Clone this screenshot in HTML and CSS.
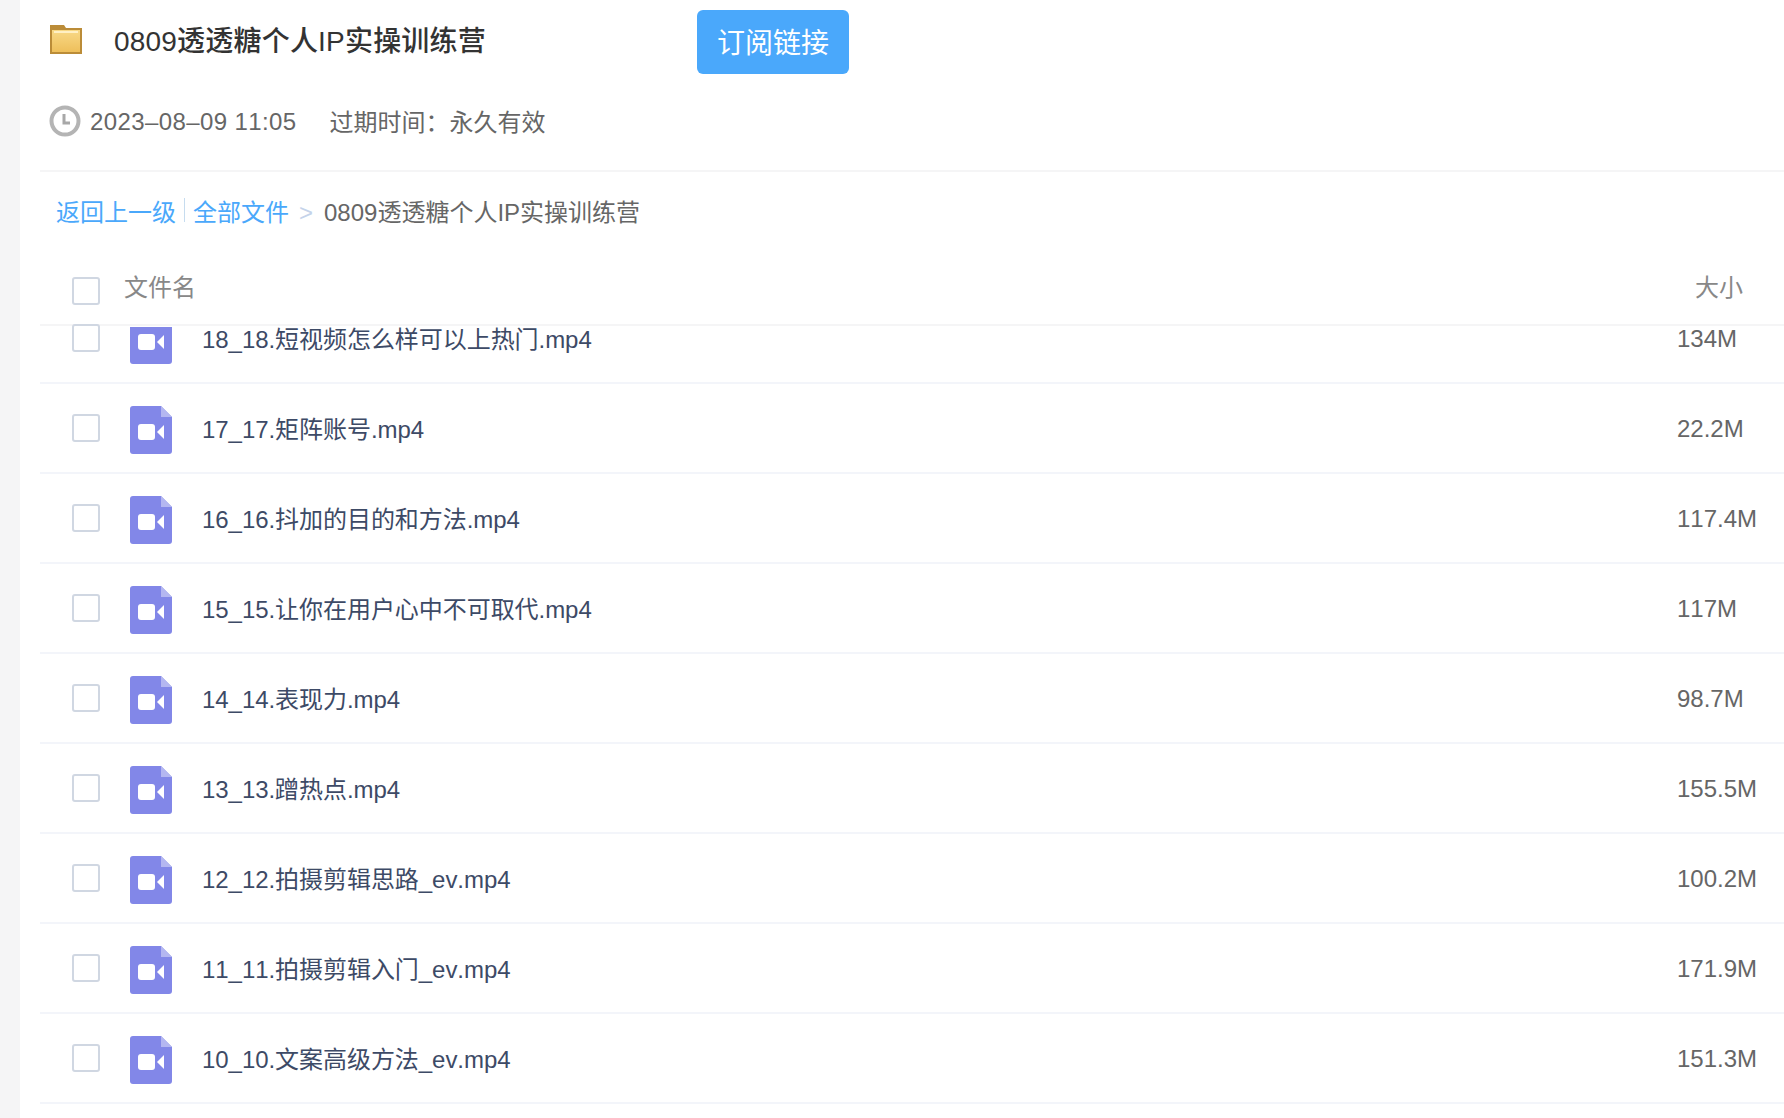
FILE: index.html
```html
<!DOCTYPE html>
<html lang="zh-CN">
<head>
    <meta charset="UTF-8">
    <title>0809透透糖个人IP实操训练营</title>
    <link rel="stylesheet" href="styles.css">
</head>
<body>
    <!-- Shared video file icon -->
    <svg class="icon-defs" width="0" height="0">
        <symbol id="video-file" viewBox="0 0 42 48">
            <path d="M3 0h28l11 11v34a3 3 0 0 1-3 3H3a3 3 0 0 1-3-3V3a3 3 0 0 1 3-3z" fill="#8287e8"/>
            <path d="M31 0l11 11H31z" fill="#b4b7f1"/>
            <rect x="8" y="18" width="17" height="16" rx="3" fill="#fff"/>
            <path d="M34 19v14l-7-7z" fill="#fff"/>
        </symbol>
    </svg>

    <div class="side-strip"></div>
    <main class="share">
        <!-- Share title -->
        <div class="share-head">
            <svg class="folder-icon" viewBox="0 0 32 30" width="32" height="30">
                <defs>
                    <linearGradient id="folder-fill" x1="0" y1="0" x2="0" y2="1">
                        <stop offset="0" stop-color="#f8d987"/>
                        <stop offset="1" stop-color="#eebf5b"/>
                    </linearGradient>
                </defs>
                <path d="M0 1h14l2 3h16v26H0z" fill="#bb8c38"/>
                <path d="M2 6h28v22H2z" fill="url(#folder-fill)"/>
                <path d="M4 7h24v2H4z" fill="#fff0c4"/>
            </svg>
            <h1>0809透透糖个人IP实操训练营</h1>
            <a class="btn-subscribe" href="#">订阅链接</a>
        </div>
        <div class="share-meta">
            <svg class="clock-icon" viewBox="0 0 32 32" width="32" height="32">
                <circle cx="16" cy="16" r="13.5" fill="none" stroke="#b4b4b4" stroke-width="4"/>
                <path d="M15 9v9h6" fill="none" stroke="#a8a8a8" stroke-width="3"/>
            </svg>
            <span class="share-date">2023–08–09 11:05</span>
            <span class="share-expire">过期时间&#xFF1A;永久有效</span>
        </div>

        <!-- Breadcrumb -->
        <div class="crumbs">
            <a href="#">返回上一级</a>
            <i class="crumb-bar"></i>
            <a href="#">全部文件</a>
            <span class="crumb-sep">&gt;</span>
            <span>0809透透糖个人IP实操训练营</span>
        </div>

        <!-- File table -->
        <div class="file-header">
            <span class="check"></span>
            <span class="file-header-name">文件名</span>
            <span class="file-header-size">大小</span>
        </div>
        <div class="file-scroll">
            <ul class="file-list">
                <li class="file-row">
                    <span class="check"></span>
                    <svg class="video-icon" width="42" height="48"><use href="#video-file"/></svg>
                    <span class="file-name">18_18.短视频怎么样可以上热门.mp4</span>
                    <span class="file-size">134M</span>
                </li>
                <li class="file-row">
                    <span class="check"></span>
                    <svg class="video-icon" width="42" height="48"><use href="#video-file"/></svg>
                    <span class="file-name">17_17.矩阵账号.mp4</span>
                    <span class="file-size">22.2M</span>
                </li>
                <li class="file-row">
                    <span class="check"></span>
                    <svg class="video-icon" width="42" height="48"><use href="#video-file"/></svg>
                    <span class="file-name">16_16.抖加的目的和方法.mp4</span>
                    <span class="file-size">117.4M</span>
                </li>
                <li class="file-row">
                    <span class="check"></span>
                    <svg class="video-icon" width="42" height="48"><use href="#video-file"/></svg>
                    <span class="file-name">15_15.让你在用户心中不可取代.mp4</span>
                    <span class="file-size">117M</span>
                </li>
                <li class="file-row">
                    <span class="check"></span>
                    <svg class="video-icon" width="42" height="48"><use href="#video-file"/></svg>
                    <span class="file-name">14_14.表现力.mp4</span>
                    <span class="file-size">98.7M</span>
                </li>
                <li class="file-row">
                    <span class="check"></span>
                    <svg class="video-icon" width="42" height="48"><use href="#video-file"/></svg>
                    <span class="file-name">13_13.蹭热点.mp4</span>
                    <span class="file-size">155.5M</span>
                </li>
                <li class="file-row">
                    <span class="check"></span>
                    <svg class="video-icon" width="42" height="48"><use href="#video-file"/></svg>
                    <span class="file-name">12_12.拍摄剪辑思路_ev.mp4</span>
                    <span class="file-size">100.2M</span>
                </li>
                <li class="file-row">
                    <span class="check"></span>
                    <svg class="video-icon" width="42" height="48"><use href="#video-file"/></svg>
                    <span class="file-name">11_11.拍摄剪辑入门_ev.mp4</span>
                    <span class="file-size">171.9M</span>
                </li>
                <li class="file-row">
                    <span class="check"></span>
                    <svg class="video-icon" width="42" height="48"><use href="#video-file"/></svg>
                    <span class="file-name">10_10.文案高级方法_ev.mp4</span>
                    <span class="file-size">151.3M</span>
                </li>
            </ul>
        </div>
    </main>
</body>
</html>
```

FILE: styles.css
```css
* {
    margin: 0;
    padding: 0;
    box-sizing: border-box;
}

html, body {
    height: 100%;
    overflow: hidden;
}

body {
    display: flex;
    background-color: #fff;
    color: #666;
    font-family: "Liberation Sans", "Noto Sans CJK SC", sans-serif;
    font-size: 24px;
    font-kerning: none;
}

.icon-defs {
    position: absolute;
}

.side-strip {
    width: 20px;
    background-color: #f5f5f6;
}

.share {
    flex: 1;
    min-width: 0;
    padding-left: 20px;
}

/* Title block */
.share-head {
    display: flex;
    align-items: center;
    height: 74px;
    padding: 10px 0 0 10px;
}

.folder-icon {
    margin-top: -6px;
}

.share-head h1 {
    width: 583px;
    margin: 0 0 6px 32px;
    color: #333;
    font-size: 28px;
    font-weight: 500;
    letter-spacing: 0.2px;
}

.btn-subscribe {
    display: block;
    width: 152px;
    height: 64px;
    line-height: 68px;
    background-color: #4aa8fb;
    color: #fff;
    font-size: 28px;
    text-align: center;
    text-decoration: none;
    border-radius: 6px;
}

.share-meta {
    display: flex;
    align-items: center;
    height: 98px;
    padding: 0 0 2px 9px;
    border-bottom: 2px solid #f5f5f6;
    color: #666;
}

.clock-icon {
    margin-right: 9px;
}

.share-date {
    margin: 2px 33px 0 0;
    letter-spacing: 0.4px;
}

.share-expire {
    padding-bottom: 2px;
}

/* Breadcrumb */
.crumbs {
    display: flex;
    align-items: center;
    height: 85px;
    padding: 0 0 9px 16px;
}

.crumbs a {
    color: #4aa8fb;
    text-decoration: none;
}

.crumb-bar {
    width: 1px;
    height: 24px;
    margin: 0 8px;
    background-color: #c6dcef;
}

.crumb-sep {
    margin: 6px 11px 0 10px;
    color: #c5d3ea;
}

/* File table */
.file-header {
    display: flex;
    align-items: center;
    height: 69px;
    padding: 0 40px 10px 32px;
    border-bottom: 2px solid #f5f5f6;
    color: #888;
}

.file-header .check {
    margin-top: 10px;
}

.check {
    flex: none;
    width: 28px;
    height: 28px;
    background-color: #fff;
    border: 2px solid #d0d7e2;
    border-radius: 3px;
}

.file-header-name {
    flex: 1;
    margin-left: 24px;
}

.file-header-size {
    margin-right: 1px;
}

.file-scroll {
    height: 796px;
    margin-top: -2px;
    overflow: hidden;
}

.file-list {
    margin-top: -30px;
    list-style: none;
}

.file-row {
    display: flex;
    align-items: center;
    height: 90px;
    padding-left: 32px;
    border-bottom: 2px solid #f3f5fa;
}

.video-icon {
    flex: none;
    margin: 4px 0 0 30px;
}

/* top row is scrolled partly under the table header */
.file-row:first-child .video-icon {
    clip-path: inset(11px 0 0 0);
}

.file-name {
    flex: 1;
    margin-left: 30px;
    padding-bottom: 2px;
    color: #3d4a66;
    letter-spacing: -0.05px;
}

.file-size {
    width: 107px;
    margin-top: 2px;
    color: #666;
}
```
